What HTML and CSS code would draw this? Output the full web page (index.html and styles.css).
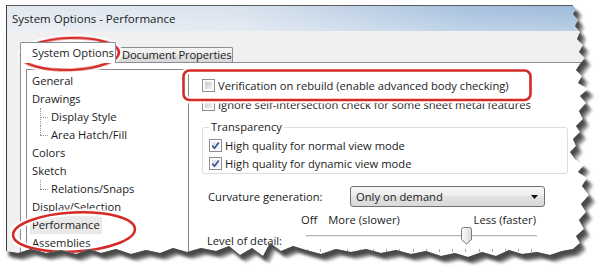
FILE: index.html
```html
<!DOCTYPE html>
<html>
<head>
<meta charset="utf-8">
<link rel="stylesheet" href="styles.css">
</head>
<body>
<div class="window">
  <div class="titlebar">System Options - Performance</div>
  <div class="content">
    <div class="tabs">
      <div class="tab active">System Options</div>
      <div class="tab inactive">Document Properties</div>
    </div>
    <div class="panel">
      <div class="tree">
        <div class="item">General</div>
        <div class="item">Drawings</div>
        <div class="item child">Display Style</div>
        <div class="item child last">Area Hatch/Fill</div>
        <div class="item">Colors</div>
        <div class="item">Sketch</div>
        <div class="item child last">Relations/Snaps</div>
        <div class="item">Display/Selection</div>
        <div class="item sel"><span>Performance</span></div>
        <div class="item">Assemblies</div>
        <div class="item">External References</div>
      </div>
      <div class="pane">
        <div class="cbrow first"><span class="cb"></span><span>Verification on rebuild (enable advanced body checking)</span></div>
        <div class="cbrow"><span class="cb"></span><span>Ignore self-intersection check for some sheet metal features</span></div>
        <fieldset class="group">
          <legend>Transparency</legend>
          <div class="cbrow grp"><span class="cb on"><svg width="11" height="11" viewBox="0 0 11 11"><path d="M2.3,5.6 L4.5,8.2 L8.8,2.4" fill="none" stroke="#3a5595" stroke-width="1.7"/></svg></span><span>High quality for normal view mode</span></div>
          <div class="cbrow grp"><span class="cb on"><svg width="11" height="11" viewBox="0 0 11 11"><path d="M2.3,5.6 L4.5,8.2 L8.8,2.4" fill="none" stroke="#3a5595" stroke-width="1.7"/></svg></span><span>High quality for dynamic view mode</span></div>
        </fieldset>
        <div class="curv">
          <span class="lbl">Curvature generation:</span>
          <div class="select"><span>Only on demand</span><svg width="7" height="4" viewBox="0 0 7 4"><path d="M0,0 H7 L3.5,4 Z" fill="#111"/></svg></div>
        </div>
        <div class="sliderlabels">
          <span>Off</span><span class="more">More (slower)</span><span class="less">Less (faster)</span>
        </div>
        <div class="level">
          <span class="lbl">Level of detail:</span>
          <div class="slider">
            <div class="track"></div>
            <svg class="thumb" width="11" height="18" viewBox="0 0 11 18">
              <defs><linearGradient id="tg" x1="0" y1="0" x2="1" y2="0"><stop offset="0" stop-color="#ffffff"/><stop offset="1" stop-color="#d9d9d9"/></linearGradient></defs>
              <path d="M2.5,0.5 H8.5 Q10.5,0.5 10.5,2.5 V12.5 L5.5,17 L0.5,12.5 V2.5 Q0.5,0.5 2.5,0.5 Z" fill="url(#tg)" stroke="#7a7a7a"/>
            </svg>
            <div class="ticks"></div>
          </div>
        </div>
      </div>
    </div>
  </div>
</div>

<svg class="marks" width="601" height="276" viewBox="0 0 601 276">
  <g fill="none" stroke="#ffffff" stroke-width="7" opacity="0.9">
    <ellipse cx="70" cy="54" rx="49" ry="16" transform="rotate(-2 70 54)"/>
    <rect x="183.5" y="70.5" width="347" height="29.5" rx="6"/>
    <ellipse cx="74" cy="232" rx="61" ry="19.5" transform="rotate(-3 74 232)"/>
  </g>
  <g fill="none" stroke="#d42b26" stroke-width="2.6">
    <ellipse cx="70" cy="54" rx="49" ry="16" transform="rotate(-2 70 54)"/>
    <rect x="183.5" y="70.5" width="347" height="29.5" rx="6"/>
    <ellipse cx="74" cy="232" rx="61" ry="19.5" transform="rotate(-3 74 232)"/>
  </g>
</svg>

<svg class="torn" width="601" height="276" viewBox="0 0 601 276">
  <defs>
    <filter id="blur" x="-10%" y="-10%" width="120%" height="130%"><feGaussianBlur stdDeviation="1.8"/></filter>
    <clipPath id="outside"><path clip-rule="evenodd" d="M0,0H601V276H0Z M5.5,4.5 L572,4.5 L576,9 L573,14 L578,20 L575,26 L580,32 L577,39 L583,45 L579,52 L585,58 L580,64 L576,70 L582,76 L578,83 L588,89 L580,96 L586,103 L579,111 L583,119 L576,126 L580,132 L573,139 L576,146 L570,152 L575,159 L584,165 L578,172 L587,178 L582,186 L589,195 L581,204 L586,212 L579,220 L584,229 L576,236 L580,243 L573,249 L562,251 L550,255 L537,252 L522,254 L509,250 L496,256 L482,252 L468,257 L455,253 L441,256 L426,251 L411,254 L396,250 L381,253 L366,249 L351,252 L336,249 L321,254 L306,250 L293,246 L281,251 L270,243 L263,256 L252,248 L240,255 L229,246 L216,251 L201,248 L187,252 L173,248 L160,253 L146,250 L131,254 L116,249 L101,253 L89,249 L76,254 L61,250 L46,253 L31,249 L18,253 L5.5,251 Z"/></clipPath>
  </defs>
  <path fill="#fff" fill-rule="evenodd" d="M0,0H601V276H0Z M5.5,4.5 L572,4.5 L576,9 L573,14 L578,20 L575,26 L580,32 L577,39 L583,45 L579,52 L585,58 L580,64 L576,70 L582,76 L578,83 L588,89 L580,96 L586,103 L579,111 L583,119 L576,126 L580,132 L573,139 L576,146 L570,152 L575,159 L584,165 L578,172 L587,178 L582,186 L589,195 L581,204 L586,212 L579,220 L584,229 L576,236 L580,243 L573,249 L562,251 L550,255 L537,252 L522,254 L509,250 L496,256 L482,252 L468,257 L455,253 L441,256 L426,251 L411,254 L396,250 L381,253 L366,249 L351,252 L336,249 L321,254 L306,250 L293,246 L281,251 L270,243 L263,256 L252,248 L240,255 L229,246 L216,251 L201,248 L187,252 L173,248 L160,253 L146,250 L131,254 L116,249 L101,253 L89,249 L76,254 L61,250 L46,253 L31,249 L18,253 L5.5,251 Z"/>
  <g clip-path="url(#outside)">
    <path transform="translate(6,7)" fill="#9a9a9a" filter="url(#blur)" d="M5.5,4.5 L572,4.5 L576,9 L573,14 L578,20 L575,26 L580,32 L577,39 L583,45 L579,52 L585,58 L580,64 L576,70 L582,76 L578,83 L588,89 L580,96 L586,103 L579,111 L583,119 L576,126 L580,132 L573,139 L576,146 L570,152 L575,159 L584,165 L578,172 L587,178 L582,186 L589,195 L581,204 L586,212 L579,220 L584,229 L576,236 L580,243 L573,249 L562,251 L550,255 L537,252 L522,254 L509,250 L496,256 L482,252 L468,257 L455,253 L441,256 L426,251 L411,254 L396,250 L381,253 L366,249 L351,252 L336,249 L321,254 L306,250 L293,246 L281,251 L270,243 L263,256 L252,248 L240,255 L229,246 L216,251 L201,248 L187,252 L173,248 L160,253 L146,250 L131,254 L116,249 L101,253 L89,249 L76,254 L61,250 L46,253 L31,249 L18,253 L5.5,251 Z"/>
    <path transform="translate(3,5)" fill="#484848" filter="url(#blur)" d="M5.5,4.5 L572,4.5 L576,9 L573,14 L578,20 L575,26 L580,32 L577,39 L583,45 L579,52 L585,58 L580,64 L576,70 L582,76 L578,83 L588,89 L580,96 L586,103 L579,111 L583,119 L576,126 L580,132 L573,139 L576,146 L570,152 L575,159 L584,165 L578,172 L587,178 L582,186 L589,195 L581,204 L586,212 L579,220 L584,229 L576,236 L580,243 L573,249 L562,251 L550,255 L537,252 L522,254 L509,250 L496,256 L482,252 L468,257 L455,253 L441,256 L426,251 L411,254 L396,250 L381,253 L366,249 L351,252 L336,249 L321,254 L306,250 L293,246 L281,251 L270,243 L263,256 L252,248 L240,255 L229,246 L216,251 L201,248 L187,252 L173,248 L160,253 L146,250 L131,254 L116,249 L101,253 L89,249 L76,254 L61,250 L46,253 L31,249 L18,253 L5.5,251 Z"/>
  </g>
</svg>
</body>
</html>
```

FILE: styles.css
```css
* { box-sizing: border-box; }
html, body { margin: 0; background: #fff; overflow: hidden; }
body {
  width: 601px;
  height: 276px;
  position: relative;
  font-family: "Open Sans", "Noto Sans", sans-serif;
  font-size: 11.2px;
  color: #1b1b1b;
}

.window {
  margin: 5px 0 0 6px;
  width: 590px;
  height: 271px;
  border-top: 1px solid #5b5b5b;
  border-left: 1px solid #3f3f3f;
  background: #f0f0f0;
  overflow: hidden;
}

.titlebar {
  height: 25px;
  line-height: 25px;
  padding-left: 5px;
  font-size: 11.5px;
  background:
    linear-gradient(to bottom, rgba(255,255,255,0) 0%, rgba(255,255,255,0.3) 100%),
    linear-gradient(to right, #e3e9f1 0%, #d8e2ed 40%, #a6c1de 78%, #9cb9da 100%);
}

.content { padding: 11px 0 0 13px; }

.tabs {
  display: flex;
  align-items: flex-end;
  height: 20px;
}
.tab { white-space: nowrap; }
.tab.active {
  position: relative;
  z-index: 1;
  width: 96px;
  height: 21px;
  margin-bottom: -1px;
  padding-left: 11px;
  line-height: 19px;
  border: 1px solid #898c95;
  border-bottom: none;
  border-radius: 2px 2px 0 0;
  background: #fff;
}
.tab.inactive {
  width: 117px;
  height: 15px;
  padding-left: 6px;
  line-height: 14px;
  letter-spacing: -0.12px;
  border: 1px solid #898c95;
  border-left: none;
  border-bottom: none;
  border-radius: 0 2px 0 0;
  background: linear-gradient(#f4f4f4, #ececec 50%, #e0e0e0 50%, #d8d8d8);
}

.panel {
  display: flex;
  height: 300px;
  border-top: 1px solid #898c95;
  border-left: 1px solid #898c95;
  background: #fff;
}

.tree {
  flex: none;
  width: 163px;
  height: 260px;
  margin: 6px 0 0 5px;
  padding-top: 2px;
  border: 1px solid #828790;
}
.item {
  position: relative;
  height: 18px;
  line-height: 18px;
  padding-left: 5px;
  white-space: nowrap;
}
.item.child { padding-left: 24px; }
.item.child::before {
  content: "";
  position: absolute;
  left: 13px;
  top: 0;
  height: 18px;
  border-left: 1px dotted #9a9a9a;
}
.item.child.last::before { height: 9px; }
.item.child::after {
  content: "";
  position: absolute;
  left: 13px;
  top: 9px;
  width: 8px;
  border-top: 1px dotted #9a9a9a;
}
.item.sel span {
  display: inline-block;
  margin-left: -2px;
  padding: 0 2px;
  background: #e9e9e9;
}

.pane {
  flex: 1;
  padding-left: 13px;
}
.cbrow {
  display: flex;
  align-items: center;
  gap: 3px;
  height: 19px;
  white-space: nowrap;
}
.cbrow.first { margin-top: 13px; }
.cbrow.grp { height: 18px; }

.cb {
  flex: none;
  width: 13px;
  height: 13px;
  padding: 2px;
  border: 1px solid #8e8f8f;
  background: linear-gradient(135deg, #c6c9ce, #f2f2f2) content-box, #fbfbfb;
}
.cb.on { background: linear-gradient(135deg, #dcdfe3, #f6f6f6) content-box, #fbfbfb; }
.cb svg { display: block; margin: -2px; }

.group {
  width: 366px;
  margin: 6px 0 0 0;
  padding: 2px 0 1px 6px;
  border: 1px solid #d5dfe5;
  border-radius: 3px;
}
.group legend {
  padding: 0 2px;
  line-height: 14px;
}

.curv {
  display: flex;
  align-items: center;
  height: 21px;
  margin-top: 12px;
}
.curv .lbl {
  width: 148px;
  padding-left: 6px;
}
.select {
  display: flex;
  align-items: center;
  justify-content: space-between;
  width: 195px;
  height: 21px;
  padding: 0 6px 0 5px;
  border: 1px solid #707070;
  border-radius: 3px;
  background: linear-gradient(#f6f6f6, #ececec 50%, #e2e2e2 50%, #d9d9d9);
}

.sliderlabels {
  display: flex;
  width: 334px;
  height: 16px;
  line-height: 16px;
  margin-top: 5px;
  padding-left: 99px;
}
.sliderlabels .more { margin-left: 11px; }
.sliderlabels .less { margin-left: auto; }

.level {
  display: flex;
  height: 30px;
}
.level .lbl {
  width: 104px;
  margin-top: 6px;
  padding-left: 5px;
  line-height: 14px;
}
.slider {
  position: relative;
  width: 231px;
  height: 30px;
}
.track {
  margin-top: 7px;
  height: 2px;
  border-top: 1px solid #b4b4b4;
  border-bottom: 1px solid #ececec;
}
.thumb {
  position: absolute;
  left: 155px;
  top: -1px;
}
.ticks {
  position: absolute;
  left: 1px;
  right: 0;
  top: 21px;
  height: 3px;
  background: repeating-linear-gradient(to right, #a8a8a8 0 1px, transparent 1px 13.2px);
}

.marks, .torn {
  position: absolute;
  left: 0;
  top: 0;
  pointer-events: none;
}
```
